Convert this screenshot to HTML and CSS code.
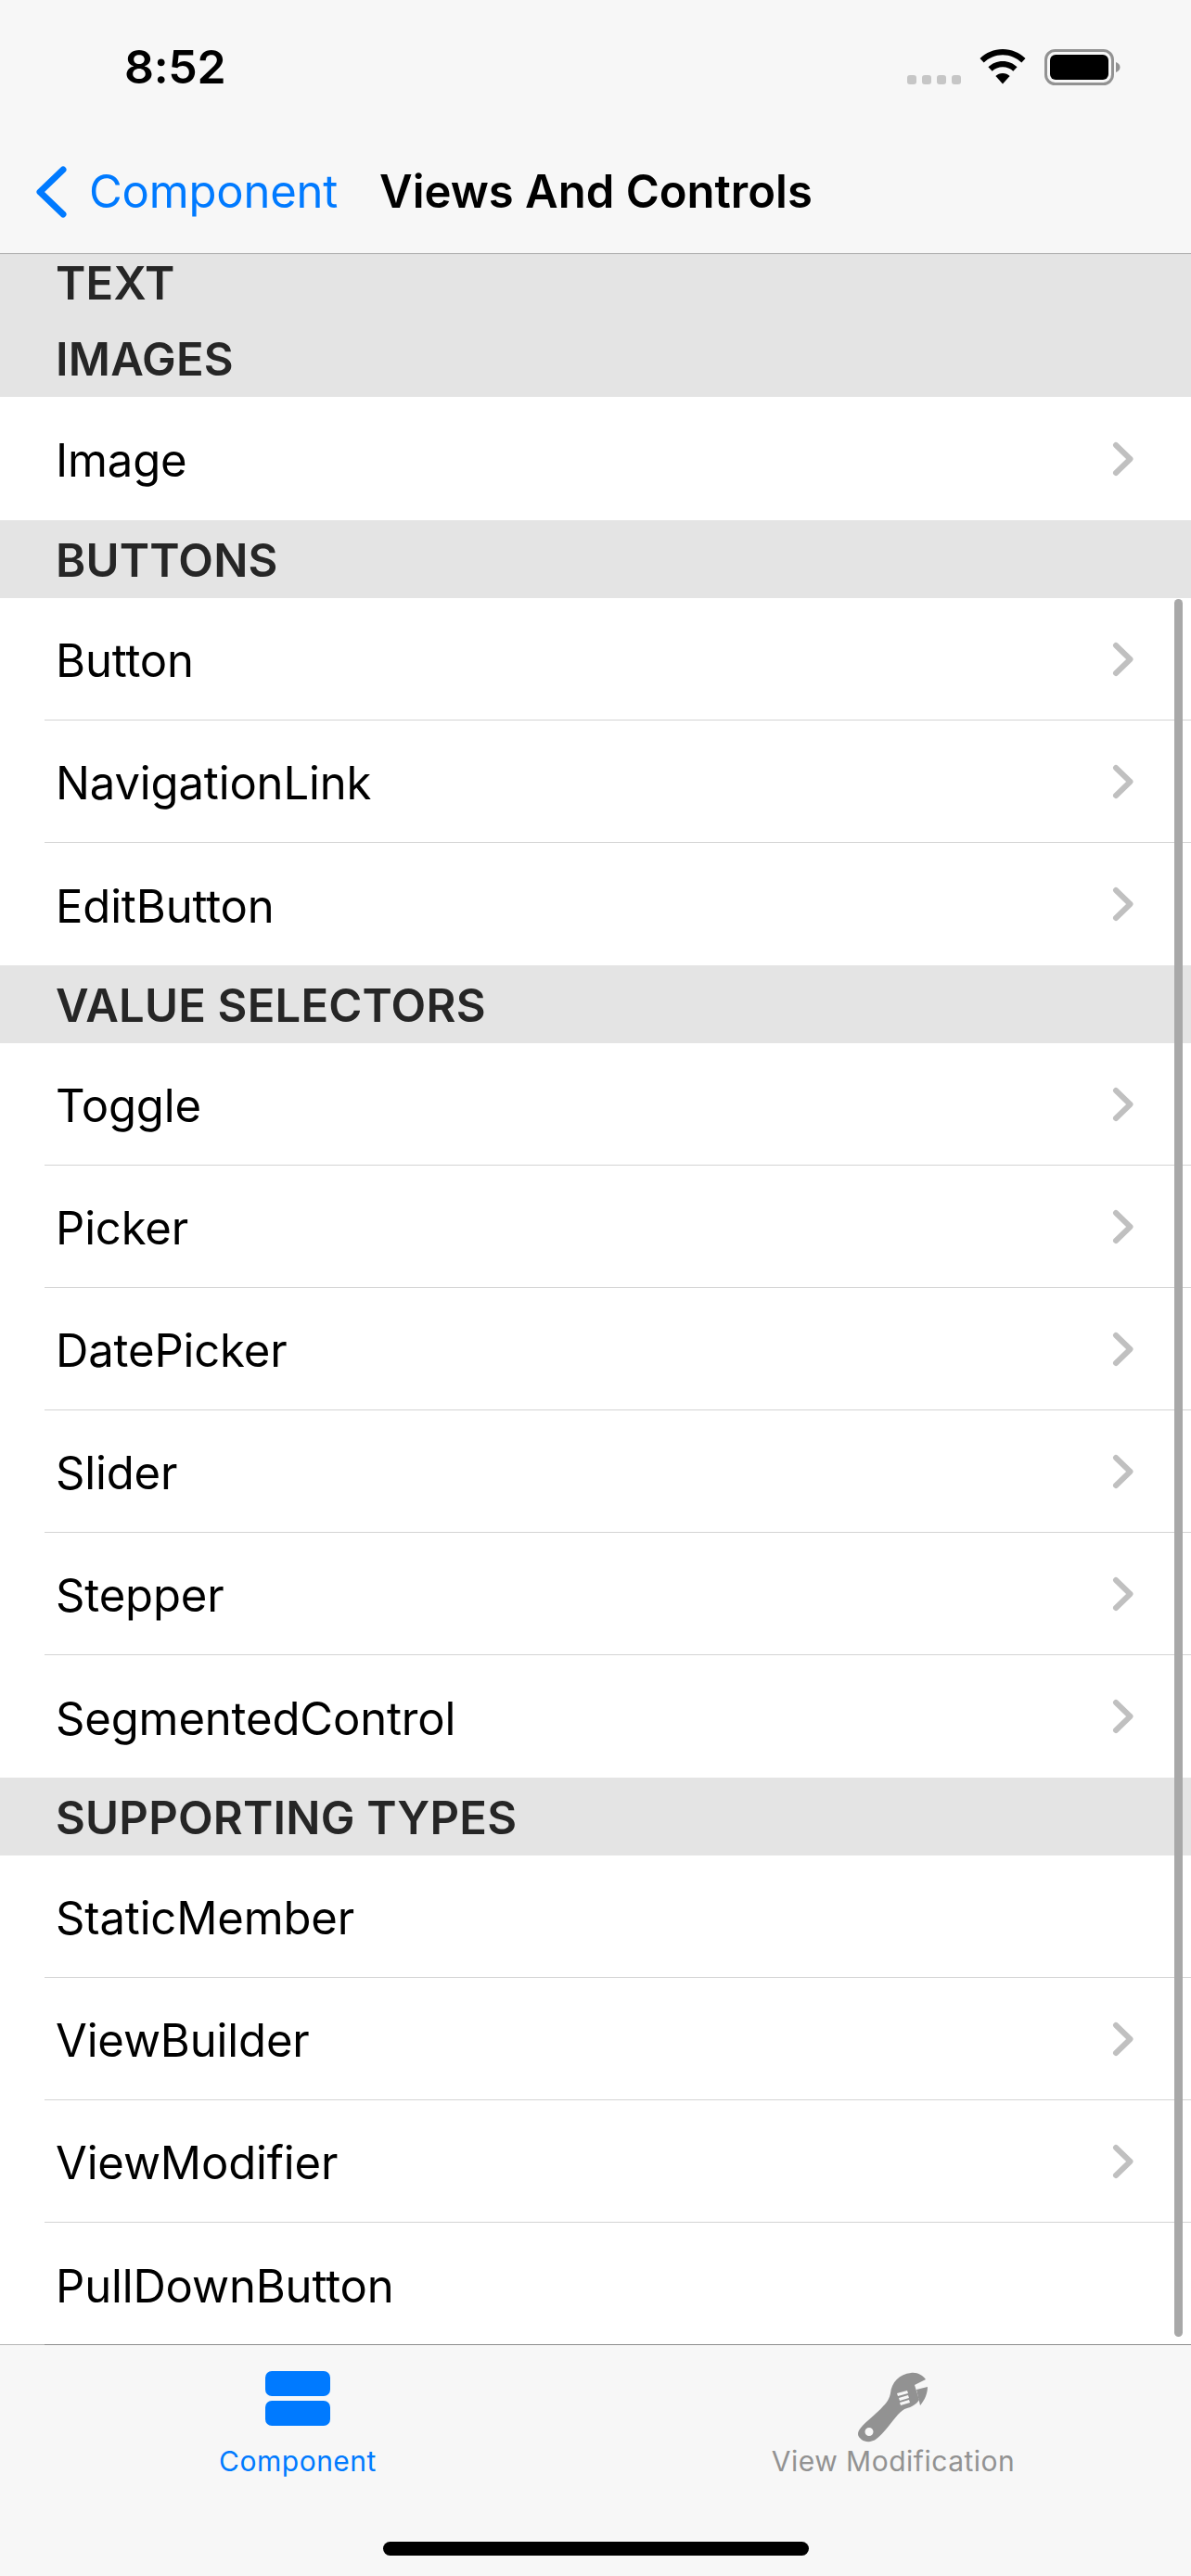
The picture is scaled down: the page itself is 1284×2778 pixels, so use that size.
FILE: index.html
```html
<!DOCTYPE html>
<html lang="en">
<head>
    <meta charset="UTF-8">
    <title>Views And Controls</title>
    <link rel="stylesheet" href="styles.css">
</head>
<body>
<div class="screen">
    <div class="top-bar">
        <div class="status">
            <span class="time">8:52</span>
            <div class="status-icons">
                <svg class="signal" width="58" height="10" viewBox="0 0 58 10"><rect x="0" y="0" width="10" height="10" rx="3"/><rect x="16" y="0" width="10" height="10" rx="3"/><rect x="32" y="0" width="10" height="10" rx="3"/><rect x="48" y="0" width="10" height="10" rx="3"/></svg>
                <svg class="wifi" width="50" height="38" viewBox="0 0 50 38"><path d="M25 0C34.500 0 43 3.700 49.500 10L45.300 14.500C40 9.300 32.800 6.200 25 6.200S10 9.300 4.700 14.500L.5 10C7 3.700 15.500 0 25 0Z"/><path d="M25 13C31.100 13 36.500 15.400 40.600 19.300L36.300 23.800C33.400 21 29.400 19.300 25 19.300S16.600 21 13.700 23.800L9.400 19.300C13.500 15.400 18.900 13 25 13Z"/><path d="M25 26C28 26 30.600 27.100 32.600 29L25 37.500L17.400 29C19.400 27.100 22 26 25 26Z"/></svg>
                <svg class="battery" width="82" height="40" viewBox="0 0 82 40"><rect x="1.500" y="1.500" width="72" height="36" rx="10" fill="none" stroke="#929292" stroke-width="3"/><rect x="6" y="6" width="63" height="27" rx="6"/><path d="M77 14C80 15 81.500 17 81.500 19.500S80 24 77 25Z" fill="#929292"/></svg>
            </div>
        </div>
        <div class="nav">
            <div class="back">
                <svg width="36" height="56" viewBox="0 0 36 56"><path d="M30 4L5 28L30 52" fill="none" stroke="#007aff" stroke-width="7" stroke-linecap="round" stroke-linejoin="round"/></svg>
                <span>Component</span>
            </div>
            <span class="nav-title">Views And Controls</span>
        </div>
    </div>

    <div class="list">
        <div class="section-head head-short">TEXT</div>
        <div class="section-head">IMAGES</div>
        <div class="row row-tall last"><span>Image</span><svg class="chev" width="24" height="38" viewBox="0 0 24 38"><path d="M5 4L20.500 19L5 34"/></svg></div>

        <div class="section-head">BUTTONS</div>
        <div class="row"><span>Button</span><svg class="chev" width="24" height="38" viewBox="0 0 24 38"><path d="M5 4L20.500 19L5 34"/></svg></div>
        <div class="row"><span>NavigationLink</span><svg class="chev" width="24" height="38" viewBox="0 0 24 38"><path d="M5 4L20.500 19L5 34"/></svg></div>
        <div class="row last"><span>EditButton</span><svg class="chev" width="24" height="38" viewBox="0 0 24 38"><path d="M5 4L20.500 19L5 34"/></svg></div>

        <div class="section-head">VALUE SELECTORS</div>
        <div class="row"><span>Toggle</span><svg class="chev" width="24" height="38" viewBox="0 0 24 38"><path d="M5 4L20.500 19L5 34"/></svg></div>
        <div class="row"><span>Picker</span><svg class="chev" width="24" height="38" viewBox="0 0 24 38"><path d="M5 4L20.500 19L5 34"/></svg></div>
        <div class="row"><span>DatePicker</span><svg class="chev" width="24" height="38" viewBox="0 0 24 38"><path d="M5 4L20.500 19L5 34"/></svg></div>
        <div class="row"><span>Slider</span><svg class="chev" width="24" height="38" viewBox="0 0 24 38"><path d="M5 4L20.500 19L5 34"/></svg></div>
        <div class="row"><span>Stepper</span><svg class="chev" width="24" height="38" viewBox="0 0 24 38"><path d="M5 4L20.500 19L5 34"/></svg></div>
        <div class="row last"><span>SegmentedControl</span><svg class="chev" width="24" height="38" viewBox="0 0 24 38"><path d="M5 4L20.500 19L5 34"/></svg></div>

        <div class="section-head">SUPPORTING TYPES</div>
        <div class="row"><span>StaticMember</span></div>
        <div class="row"><span>ViewBuilder</span><svg class="chev" width="24" height="38" viewBox="0 0 24 38"><path d="M5 4L20.500 19L5 34"/></svg></div>
        <div class="row"><span>ViewModifier</span><svg class="chev" width="24" height="38" viewBox="0 0 24 38"><path d="M5 4L20.500 19L5 34"/></svg></div>
        <div class="row last"><span>PullDownButton</span></div>

        <div class="scroll-thumb"></div>
    </div>

    <div class="tabs">
        <div class="tab-items">
            <div class="tab active">
                <svg width="70" height="60" viewBox="0 0 70 60"><rect x="0" y="0" width="70" height="27" rx="7"/><rect x="0" y="32" width="70" height="27" rx="7"/></svg>
                <span>Component</span>
            </div>
            <div class="tab">
                <svg width="78" height="78" viewBox="0 0 78 78"><path fill-rule="evenodd" d="M2 64C6 57 21 46 28 38C33 33 35 29 36 24C37 12 46 3 58 2C65 1 71 5 74 9L62 15L67 31C64 36 58 39 54 40C50 41 47 44 44 47C37 55 28 68 21 73C16 77 9 77 5 74C1 71 0 68 2 64ZM13 61A4.500 4.500 0 1 0 13 70A4.500 4.500 0 1 0 13 61ZM43 24L54 21L55 24L44 27ZM45 29L55 26L56 29L46 32ZM46 34L56 31L57 34L47 37Z"/><path d="M64 20L76 17C76 24 73 31 68 37Z"/></svg>
                <span>View Modification</span>
            </div>
        </div>
        <div class="home-bar"></div>
    </div>
</div>
</body>
</html>
```
FILE: styles.css
```css
*{
    padding:0;
    margin:0;
    box-sizing: border-box;
}
body{
    background: #fff;
    font-family: Inter, "Liberation Sans", sans-serif;
}
.screen{
    width: 1284px;
    height: 2778px;
    overflow: hidden;
    display: flex;
    flex-direction: column;
}

/* top */
.top-bar{
    height: 274px;
    background: #f7f7f7;
    border-bottom: 1px solid #a9a9a9;
}
.status{
    height: 140px;
    display: flex;
    justify-content: space-between;
    padding: 46px 0 0 134px;
}
.time{
    font-size: 50px;
    line-height: 52px;
    font-weight: 600;
    letter-spacing: -.3px;
    color: #000;
}
.status-icons{
    display: flex;
    align-items: flex-start;
    gap: 20px;
    height: 40px;
    margin: 7px 76px 0 0;
}
.signal{
    fill: #c6c6c6;
    margin-top: 28px;
}
.nav{
    display: flex;
    align-items: center;
    height: 133px;
    padding-left: 38px;
}
.back{
    display: flex;
    align-items: center;
    gap: 22px;
    color: #007aff;
    font-size: 49px;
    letter-spacing: -.2px;
    width: 371px;
}
.nav-title{
    font-size: 49px;
    font-weight: 600;
    color: #000;
}

/* list */
.list{
    height: 2254px;
    position: relative;
    overflow: hidden;
}
.section-head{
    height: 84px;
    background: #e4e4e4;
    color: #262626;
    font-size: 49px;
    font-weight: 600;
    letter-spacing: .2px;
    line-height: 88px;
    padding-left: 60px;
}
.head-short{
    height: 70px;
    line-height: 64px;
}
.row{
    height: 132px;
    margin-left: 48px;
    padding: 4px 62px 0 12px;
    border-bottom: 1px solid #d4d4d4;
    display: flex;
    align-items: center;
    justify-content: space-between;
    font-size: 49px;
    letter-spacing: -.15px;
    color: #000;
}
.row-tall{
    height: 133px;
}
.last{
    border-bottom: 0;
}
.chev{
    margin-top: -4px;
    fill: none;
    stroke: #c0c0c0;
    stroke-width: 6;
    stroke-linecap: round;
    stroke-linejoin: round;
}
.scroll-thumb{
    position: absolute;
    right: 9px;
    top: 372px;
    bottom: 8px;
    width: 9px;
    border-radius: 5px;
    background: #a8a8a8;
}

/* tabs */
.tabs{
    flex: 1;
    background: #f7f7f7;
    border-top: 1px solid #8c8c8c;
    position: relative;
}
.tabs::before{
    content: "";
    position: absolute;
    left: 0;
    top: -1px;
    width: 48px;
    height: 1px;
    background: #b4b4b4;
}
.tab-items{
    display: flex;
    padding: 28px 0 0 0;
}
.tab{
    width: 642px;
    height: 115px;
    display: flex;
    flex-direction: column;
    align-items: center;
    justify-content: space-between;
    font-size: 30px;
    letter-spacing: .5px;
    color: #929292;
    fill: #929292;
}
.active{
    color: #007aff;
    fill: #007aff;
}
.home-bar{
    position: absolute;
    left: 413px;
    bottom: 22px;
    width: 459px;
    height: 15px;
    border-radius: 8px;
    background: #000;
}
```
